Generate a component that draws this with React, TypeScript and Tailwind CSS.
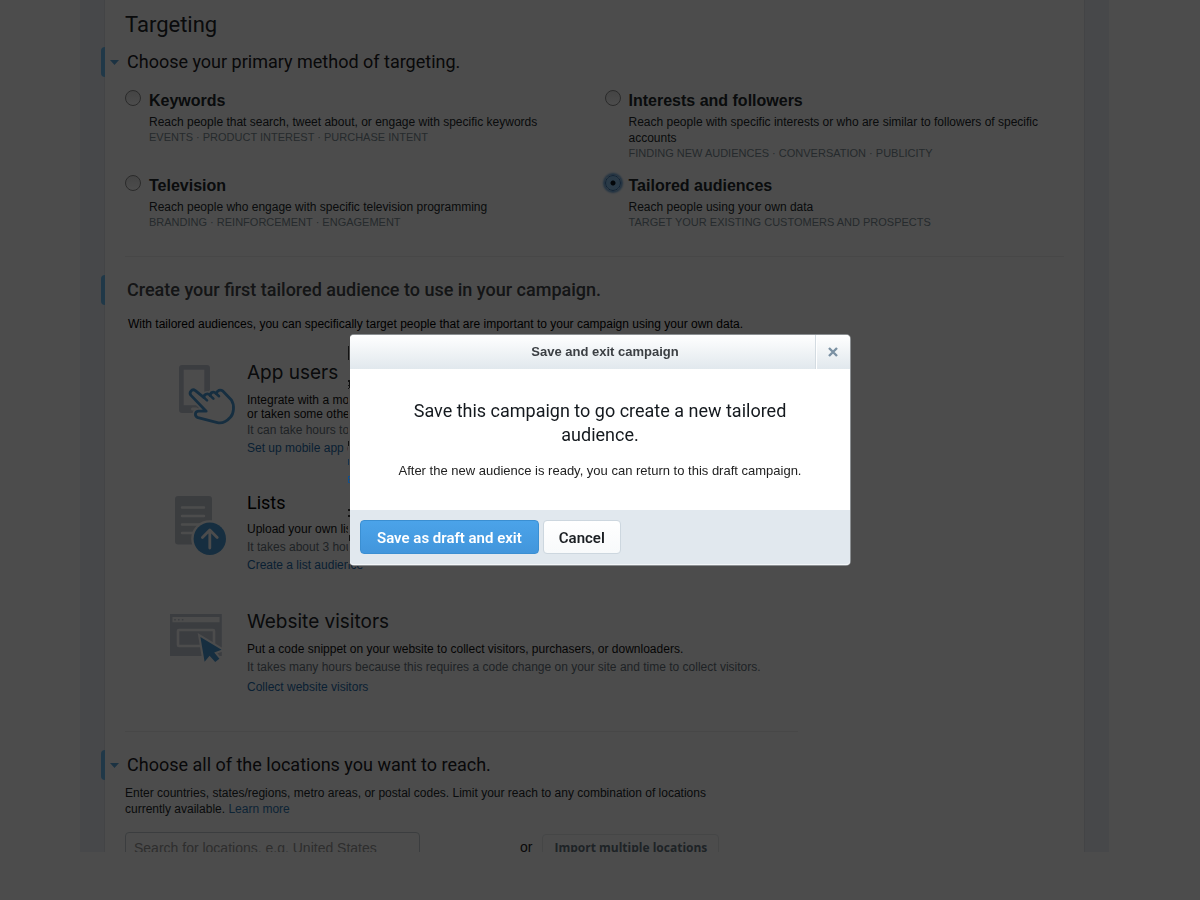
import type { ReactNode } from 'react';

type Option = { id: string; title: string; text: string; tags: string; selected?: boolean };

const options: Option[] = [
  {
    id: 'keywords',
    title: 'Keywords',
    text: 'Reach people that search, tweet about, or engage with specific keywords',
    tags: 'EVENTS · PRODUCT INTEREST · PURCHASE INTENT',
  },
  {
    id: 'interests',
    title: 'Interests and followers',
    text: 'Reach people with specific interests or who are similar to followers of specific accounts',
    tags: 'FINDING NEW AUDIENCES · CONVERSATION · PUBLICITY',
  },
  {
    id: 'television',
    title: 'Television',
    text: 'Reach people who engage with specific television programming',
    tags: 'BRANDING · REINFORCEMENT · ENGAGEMENT',
  },
  {
    id: 'tailored',
    title: 'Tailored audiences',
    text: 'Reach people using your own data',
    tags: 'TARGET YOUR EXISTING CUSTOMERS AND PROSPECTS',
    selected: true,
  },
];

function SectionHeader({ children, caret, muted }: { children: ReactNode; caret?: boolean; muted?: boolean }) {
  return (
    <div className="-ml-1 flex h-[30px]">
      <span className="w-1 shrink-0 rounded-l-sm bg-[#6cbcf0]" />
      <span className="flex w-[22px] shrink-0 items-center pl-[5px]">
        {caret && (
          <svg width="9" height="5" viewBox="0 0 9 5" aria-hidden="true">
            <path d="M0 0h9L4.5 5z" fill="#5aa7de" />
          </svg>
        )}
      </span>
      <h2
        className={
          muted
            ? "font-['Roboto',sans-serif] text-lg leading-[30px] font-medium text-[#44484c]"
            : "font-['Roboto',sans-serif] text-lg leading-[30px] text-[#1c2024]"
        }
      >
        {children}
      </h2>
    </div>
  );
}

const handShape =
  'M21 36.4C18.6 33.7 21.8 29.2 25.4 31.6L34 38.6C33.6 35.4 37.6 33.4 40.2 36.6C40.4 33 43.6 32 46.4 34.8C47 31.2 50.2 30 53 32.2L61.4 41C64.8 46.2 63.8 54.8 60.4 58.2C56.4 62.6 52.4 64.8 47.4 63.6L28 58.6C24.4 57.4 24.6 52.6 28.4 52.2H36.2Z';

function AppIcon() {
  return (
    <svg width="66" height="68" viewBox="0 0 66 68" fill="none" aria-hidden="true">
      <rect x="9" y="6" width="31" height="48" rx="3" fill="#c6ccd8" />
      <rect x="13.7" y="10.7" width="20.6" height="35.5" fill="#fff" />
      <rect x="21" y="48.5" width="7" height="3" rx="1.5" fill="#fff" />
      <path d={handShape} fill="#fff" stroke="#fff" strokeWidth="6" />
      <path d={handShape} stroke="#4a9bd6" strokeWidth="2.8" strokeLinejoin="round" />
      <path d="M34 38.6l3 2.8M40.2 36.6l3.2 3M46.4 34.8l2.6 2.4" stroke="#4a9bd6" strokeWidth="2.6" strokeLinecap="round" />
    </svg>
  );
}

function ListIcon() {
  return (
    <svg width="66" height="68" viewBox="0 0 66 68" fill="none" aria-hidden="true">
      <rect x="5" y="5" width="37" height="48.5" rx="3" fill="#c6ccd4" />
      <path d="M12 16.5h22M12 25h22M12 33.5h22M12 42h22" stroke="#fff" strokeWidth="2.4" strokeLinecap="round" />
      <circle cx="39.8" cy="47.8" r="18.6" fill="#fff" />
      <circle cx="39.8" cy="47.8" r="16.2" fill="#4a9bd6" />
      <path d="M39.8 57V39.5M32.4 46.4l7.4-7.4 7.4 7.4" stroke="#fff" strokeWidth="2.8" strokeLinecap="round" strokeLinejoin="round" />
    </svg>
  );
}

function SiteIcon() {
  return (
    <svg width="66" height="68" viewBox="0 0 66 68" fill="none" aria-hidden="true">
      <path d="M0 6h51.8v42H0z" fill="#c6ccd8" />
      <path d="M2.5 9h47v5.3h-47z" fill="#fff" />
      <path d="M4.2 11h1.6v1.4H4.2zM8 11h1.6v1.4H8zM11.8 11h1.6v1.4h-1.6z" fill="#c6ccd8" />
      <rect x="8" y="22" width="36" height="16" rx="1" stroke="#fff" strokeWidth="2.6" />
      <path
        d="M30.4 29l21.2 12.8-7.4 2.6 5.2 6.4-4.2 3.2-5.6-6.2-5 6z"
        fill="#4a9bd6"
        stroke="#fff"
        strokeWidth="4"
        className="[paint-order:stroke]"
      />
    </svg>
  );
}

const wideTitle = "pt-0.5 font-['Inter',sans-serif] text-[19px] leading-6 text-[#22262a]";
const narrowTitle = "font-['Roboto',sans-serif] text-lg leading-6 text-black";

function Source({ icon, title, titleClass, children }: { icon: ReactNode; title: string; titleClass: string; children: ReactNode }) {
  return (
    <li className="flex">
      <span className="w-[77px] shrink-0">{icon}</span>
      <div className="text-xs leading-[18px] whitespace-nowrap">
        <h3 className={titleClass}>{title}</h3>
        {children}
      </div>
    </li>
  );
}

/* Edges of the page text that show past the left side of the dialog. */
function EdgeMarks() {
  return (
    <svg className="absolute top-0 right-full" width="2" height="229" viewBox="0 0 2 229" aria-hidden="true">
      <path d="M0 0h2v229H0z" fill="#4c4c4c" />
      <path d="M0 11h1v14H0zM0 45h2v2H0zM1 47h1v6H1zM0 50h1v1H0zM0 53h1v1H0zM0 106h1v5H0zM0 174h2v2H0zM0 180h2v2H0zM1 200h1v6H1z" fill="#111" />
      <path d="M0 124h1v6H0z" fill="#17334d" />
      <path d="M0 141h1v7H0zM1 141h1v1H1zM1 144h1v1H1zM1 147h1v1H1z" fill="#12508c" />
    </svg>
  );
}

export default function App() {
  return (
    <div className="relative h-screen overflow-hidden bg-white pb-12 font-['Liberation_Sans',Arial,sans-serif] text-[#23282c]">
      <div className="mr-[91px] ml-20 h-full overflow-hidden bg-[#eef1f7] px-6">
        <main className="min-h-full border-x border-[#dfe3e9] bg-white">
          <h1 className="px-5 pt-[11px] font-['Roboto',sans-serif] text-[22px] leading-7 text-[#22262a]">Targeting</h1>

          <section className="mt-2">
            <SectionHeader caret>Choose your primary method of targeting.</SectionHeader>
            <div className="mx-5 mt-[13px] grid grid-cols-2 gap-x-5 gap-y-3.5 border-b border-[#ededed] pb-[26px]">
              {options.map((o) => (
                <div key={o.id} className="flex items-start gap-2">
                  <input
                    type="radio"
                    name="method"
                    id={o.id}
                    defaultChecked={o.selected}
                    className="h-4 w-4 shrink-0 appearance-none rounded-full border border-[#8c8c8c] bg-linear-to-b from-[#e4e4e4] to-white checked:border-[#3c78b4] checked:bg-[radial-gradient(circle,#0a1420_2px,#8cc4ee_3px)] checked:shadow-[0_0_2px_2px_#6ea8dc]"
                  />
                  <label htmlFor={o.id} className="text-xs leading-4">
                    <span className="block text-base leading-[22px] font-bold">{o.title}</span>
                    <span className="mt-0.5 block">{o.text}</span>
                    <span className="block text-[11px] leading-[15px] text-[#7d8d96]">{o.tags}</span>
                  </label>
                </div>
              ))}
            </div>
          </section>

          <section className="mt-[18px]">
            <SectionHeader muted>Create your first tailored audience to use in your campaign.</SectionHeader>
            <p className="mt-[11px] pl-[23px] text-xs leading-4 text-black">
              With tailored audiences, you can specifically target people that are important to your campaign using your own data.
            </p>
            <ul className="mt-[27px] flex flex-col gap-[34px] pl-[65px]">
              <Source icon={<AppIcon />} title="App users" titleClass={wideTitle}>
                <p className="mt-2 leading-[14px] text-[#111]">
                  Integrate with a mobile app partner
                  <br />
                  or taken some other action
                </p>
                <p className="text-[#68747d]">It can take hours to collect</p>
                <a href="#app" className="block text-[#1f6cab]">Set up mobile app collection</a>
              </Source>
              <Source icon={<ListIcon />} title="Lists" titleClass={narrowTitle}>
                <p className="mt-[5px] text-[#111]">Upload your own list</p>
                <p className="text-[#68747d]">It takes about 3 hours</p>
                <a href="#list" className="block text-[#1f6cab]">Create a list audience</a>
              </Source>
              <Source icon={<SiteIcon />} title="Website visitors" titleClass={wideTitle}>
                <p className="mt-1.5 text-[#111]">Put a code snippet on your website to collect visitors, purchasers, or downloaders.</p>
                <p className="text-[#68747d]">
                  It takes many hours because this requires a code change on your site and time to collect visitors.
                </p>
                <a href="#site" className="mt-0.5 block text-[#1f6cab]">Collect website visitors</a>
              </Source>
            </ul>
            <hr className="mt-[35px] ml-5 max-w-[673px] border-[#ededed]" />
          </section>

          <section className="mt-[18px]">
            <SectionHeader caret>Choose all of the locations you want to reach.</SectionHeader>
            <div className="px-5">
              <p className="mt-[5px] max-w-[610px] text-xs leading-4">
                Enter countries, states/regions, metro areas, or postal codes. Limit your reach to any combination of locations
                currently available. <a href="#more" className="text-[#2f78b3]">Learn more</a>
              </p>
              <div className="mt-[15px] flex items-start">
                <input
                  type="text"
                  aria-label="Search for locations"
                  placeholder="Search for locations, e.g. United States"
                  className="h-8 w-[295px] rounded-sm border border-[#c6ced2] px-2 text-sm placeholder:text-[#999]"
                />
                <span className="ml-[100px] text-sm leading-[30px] text-[#222]">or</span>
                <button
                  type="button"
                  className="mt-0.5 ml-2.5 h-8 rounded border border-[#e6e9ec] bg-white px-[11px] pb-1 font-['Open_Sans',sans-serif] text-xs font-bold text-[#66757f]"
                >
                  Import multiple locations
                </button>
              </div>
            </div>
          </section>
        </main>
      </div>

      <div className="fixed inset-0 flex items-center justify-center bg-black/70">
        <div
          role="dialog"
          aria-modal="true"
          aria-labelledby="dialog-title"
          className="relative w-full max-w-[500px] rounded bg-white shadow-[0_0_0_1px_#8b8f92]"
        >
          <EdgeMarks />
          <header className="flex h-[34px] items-stretch rounded-t bg-linear-to-b from-white to-[#e1e8ed]">
            <h2 id="dialog-title" className="flex-1 pl-[45px] text-center text-[13px] leading-[34px] font-bold text-[#3b3f43]">
              Save and exit campaign
            </h2>
            <button
              type="button"
              aria-label="Close"
              className="flex w-[35px] items-center justify-center border-l border-[#d3dbe1] shadow-[inset_1px_0_0_#fff]"
            >
              <svg width="10" height="10" viewBox="0 0 10 10" aria-hidden="true">
                <path d="M1 1l8 8M9 1L1 9" stroke="#7b91a3" strokeWidth="2.4" />
              </svg>
            </button>
          </header>
          <div className="px-10 pt-[30px] pb-[29px] text-center">
            <h3 className="font-['Roboto',sans-serif] text-lg leading-6 text-[#14191e]">
              Save this campaign to go create a new tailored audience.
            </h3>
            <p className="mt-3.5 text-[13px] leading-5 text-[#222]">
              After the new audience is ready, you can return to this draft campaign.
            </p>
          </div>
          <footer className="flex gap-1 rounded-b border-b border-[#f3f6f8] bg-[#e1e8ee] px-2.5 pt-2.5 pb-2.5 font-['Roboto',sans-serif] text-[15px] font-semibold">
            <button
              type="button"
              className="h-[34px] rounded border border-[#3b8fd2] bg-linear-to-b from-[#4ba3e9] to-[#4296dc] px-4 pt-0.5 text-white"
            >
              Save as draft and exit
            </button>
            <button
              type="button"
              className="h-[34px] rounded border border-[#cdd7df] bg-linear-to-b from-white to-[#f8fafb] px-[15px] pt-0.5 text-[#1c2024]"
            >
              Cancel
            </button>
          </footer>
        </div>
      </div>
    </div>
  );
}
